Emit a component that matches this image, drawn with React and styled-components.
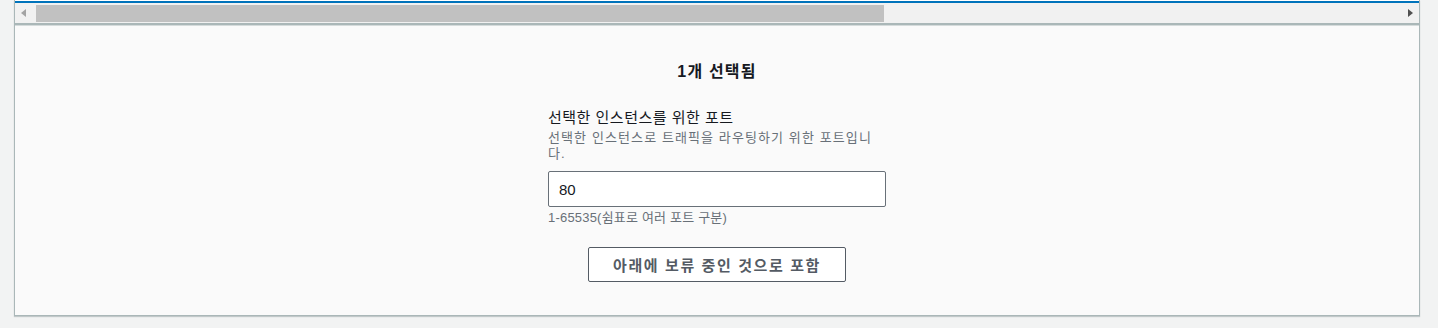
import React from 'react';
import styled, { createGlobalStyle } from 'styled-components';

const GlobalStyle = createGlobalStyle`
  body {
    margin: 0;
    background: #f2f3f3;
    font-family: "Liberation Sans", "Noto Sans CJK KR", sans-serif;
    color: #16191f;
  }
`

function App() {
    return (
        <Page>
            <GlobalStyle />
            <Panel>
                <RowEdge />
                <ScrollBar>
                    <ArrowButton>
                        <Arrow dir="left" />
                    </ArrowButton>
                    <Track>
                        <Thumb size={848} />
                    </Track>
                    <ArrowButton>
                        <Arrow dir="right" active />
                    </ArrowButton>
                </ScrollBar>

                <Content>
                    <Title>1개 선택됨</Title>
                    <Form>
                        <Label>선택한 인스턴스를 위한 포트</Label>
                        <Description>선택한 인스턴스로 트래픽을 라우팅하기 위한 포트입니다.</Description>
                        <Input defaultValue="80" />
                        <Constraint>1-65535(쉼표로 여러 포트 구분)</Constraint>
                    </Form>
                    <Button>아래에 보류 중인 것으로 포함</Button>
                </Content>
            </Panel>
        </Page>
    )
}

export default App

const Page = styled.div`
    padding: 0 18px 12px 14px;
`

const Panel = styled.div`
    border: 1px solid #aab7b8;
    border-top: none;
    background: #fafafa;
    box-shadow: 0 1px 1px rgba(0, 28, 36, 0.2);
`

const RowEdge = styled.div`
    height: 1px;
    background: #fff;
    border-bottom: 2px solid #0073bb;
`

const ScrollBar = styled.div`
    display: flex;
    height: 20px;
    background: #f1f1f1;
    border-bottom: 2px solid #aab7b8;
    box-shadow: 0 1px 0 #d5dbdb;
`

const ArrowButton = styled.div`
    width: 17px;
    display: flex;
    align-items: center;
    justify-content: center;
`

const Arrow = styled.span`
    width: 0;
    height: 0;
    border-top: 4px solid transparent;
    border-bottom: 4px solid transparent;
    ${props => props.dir === 'left'
        ? `border-right: 5px solid ${props.active ? '#505050' : '#a3a3a3'};`
        : `border-left: 5px solid ${props.active ? '#505050' : '#a3a3a3'};`}
`

const Track = styled.div`
    flex: 1;
    display: flex;
    align-items: center;
    padding: 0 4px;
`

const Thumb = styled.div`
    width: ${props => props.size}px;
    height: 17px;
    background: #c1c1c1;
`

const Content = styled.div`
    display: flex;
    flex-direction: column;
    align-items: center;
    padding: 36px 0 33px;
`

const Title = styled.h2`
    margin: 0;
    font-size: 16px;
    line-height: 22px;
    letter-spacing: 1.2px;
    font-weight: 700;
    color: #16191f;
`

const Form = styled.div`
    width: 338px;
    margin-top: 24px;
    display: flex;
    flex-direction: column;
`

const Label = styled.label`
    font-size: 15px;
    line-height: 22px;
    letter-spacing: 0.5px;
    color: #16191f;
`

const Description = styled.div`
    margin-top: 1px;
    font-size: 13px;
    line-height: 16px;
    letter-spacing: 1.1px;
    color: #687078;
`

const Input = styled.input`
    box-sizing: border-box;
    margin-top: 9px;
    height: 36px;
    padding: 0 10px;
    border: 1px solid #687078;
    border-radius: 2px;
    background: #fff;
    font-family: inherit;
    font-size: 15px;
    color: #16191f;
    outline: none;
`

const Constraint = styled.div`
    margin-top: 3px;
    font-size: 13px;
    line-height: 16px;
    letter-spacing: 0.2px;
    color: #687078;
`

const Button = styled.button`
    margin-top: 21px;
    height: 35px;
    padding: 0 24px;
    border: 1px solid #545b64;
    border-radius: 2px;
    background: #fff;
    font-family: inherit;
    font-size: 15px;
    font-weight: 700;
    letter-spacing: 1.6px;
    color: #545b64;
    cursor: pointer;
`
